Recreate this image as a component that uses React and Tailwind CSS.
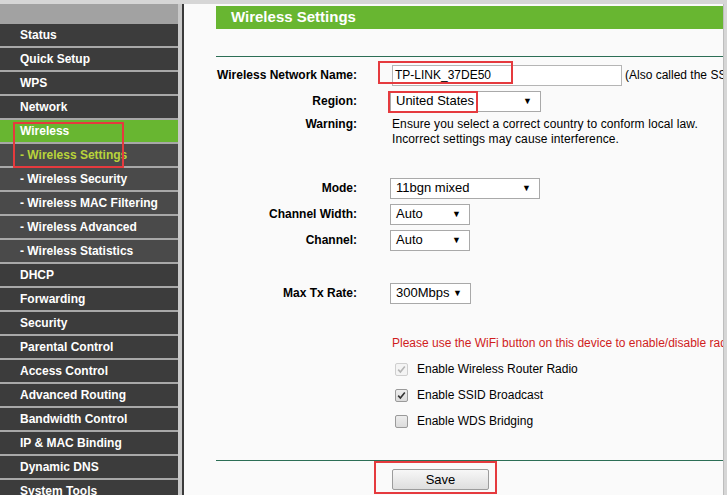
import React from 'react';

const menu = [
  { label: 'Status' },
  { label: 'Quick Setup' },
  { label: 'WPS' },
  { label: 'Network' },
  { label: 'Wireless', active: true },
  { label: '- Wireless Settings', sub: true, current: true },
  { label: '- Wireless Security', sub: true },
  { label: '- Wireless MAC Filtering', sub: true },
  { label: '- Wireless Advanced', sub: true },
  { label: '- Wireless Statistics', sub: true },
  { label: 'DHCP' },
  { label: 'Forwarding' },
  { label: 'Security' },
  { label: 'Parental Control' },
  { label: 'Access Control' },
  { label: 'Advanced Routing' },
  { label: 'Bandwidth Control' },
  { label: 'IP & MAC Binding' },
  { label: 'Dynamic DNS' },
  { label: 'System Tools' },
];

const Sidebar = () => {
  return (
    <aside className="w-[178px] flex-shrink-0 overflow-hidden">
      <div className="h-[20px] bg-[#a2a2a2]" />
      <ul>
        {menu.map((item) => {
          let bg = 'bg-[#3c3c3c] text-white';
          if (item.active) bg = 'bg-[#68b631] text-white';
          else if (item.current) bg = 'bg-[#4a4a4a] text-[#b9d43a]';
          else if (item.sub) bg = 'bg-[#4a4a4a] text-white';
          return (
            <li
              key={item.label}
              className={`h-[24px] border-b-2 border-[#a8a8a8] pl-[20px] flex items-center text-[12px] font-bold whitespace-nowrap ${bg}`}
            >
              {item.label}
            </li>
          );
        })}
      </ul>
    </aside>
  );
};

const Select = ({ value, width }) => (
  <div
    className={`${width} h-[21px] bg-white border border-[#a9a9a9] flex items-center justify-between pl-[5px] pr-[8px] text-[13px] text-black`}
  >
    <span>{value}</span>
    <span className="text-[9px] leading-none">▼</span>
  </div>
);

const Check = ({ checked, disabled }) => (
  <div
    className={`w-[13px] h-[13px] rounded-[2px] border flex items-center justify-center ${
      disabled ? 'border-[#cfcfcf] bg-[#f4f4f4]' : 'border-[#9a9a9a] bg-gradient-to-b from-[#ededed] to-[#dcdcdc]'
    }`}
  >
    {checked && (
      <svg width="9" height="9" viewBox="0 0 9 9">
        <path
          d="M1.2 4.6 L3.4 7 L7.8 1.6"
          fill="none"
          stroke={disabled ? '#b4b4b4' : '#333'}
          strokeWidth="1.6"
        />
      </svg>
    )}
  </div>
);

const Label = ({ children, className = '' }) => (
  <div className={`text-right font-bold text-[12px] text-black ${className}`}>{children}</div>
);

export default function App() {
  return (
    <div
      className="relative w-[727px] h-[495px] overflow-hidden bg-[#d6d6d6] flex flex-col"
      style={{ fontFamily: '"Liberation Sans", Arial, sans-serif' }}
    >
      <div className="h-[4px] flex-shrink-0" />
      <div className="flex flex-1 min-h-0">
        <Sidebar />
        <div className="w-[4px] bg-[#c9c9c9]" />
        <div className="w-[2px] bg-[#3a3a3a]" />
        <main className="w-[539px] bg-[#fafafa] pl-[32px] overflow-hidden flex flex-col">
          <div className="mt-[2px] h-[23px] flex-shrink-0 bg-[#68b631] pl-[15px] flex items-center text-white font-bold text-[15px]">
            Wireless Settings
          </div>
          <div className="mt-[27px] h-[1px] flex-shrink-0 bg-[#2c6e55]" />

          <div className="grid grid-cols-[141px_1fr] gap-x-[33px] text-[12px] text-black">
            <Label className="mt-[5px] h-[26px] flex items-center justify-end">Wireless Network Name:</Label>
            <div className="mt-[5px] h-[26px] flex items-center whitespace-nowrap">
              <div className="ml-[2px] w-[230px] h-[21px] bg-white border border-[#b5b5b5] flex items-center pl-[2px] text-[12px]">
                TP-LINK_37DE50
              </div>
              <span className="ml-[3px]">(Also called the SSID)</span>
            </div>

            <Label className="h-[26px] flex items-center justify-end">Region:</Label>
            <div className="h-[26px] flex items-center">
              <Select value="United States" width="w-[151px]" />
            </div>

            <Label className="mt-[3px] leading-[15px]">Warning:</Label>
            <div className="mt-[3px] leading-[15px] pl-[2px] tracking-[0.1px]">
              Ensure you select a correct country to conform local law.
              <br />
              Incorrect settings may cause interference.
            </div>

            <Label className="mt-[28px] h-[26px] flex items-center justify-end">Mode:</Label>
            <div className="mt-[28px] h-[26px] flex items-center">
              <Select value="11bgn mixed" width="w-[150px]" />
            </div>

            <Label className="h-[26px] flex items-center justify-end">Channel Width:</Label>
            <div className="h-[26px] flex items-center">
              <Select value="Auto" width="w-[80px]" />
            </div>

            <Label className="h-[26px] flex items-center justify-end">Channel:</Label>
            <div className="h-[26px] flex items-center">
              <Select value="Auto" width="w-[80px]" />
            </div>

            <Label className="mt-[27px] h-[26px] flex items-center justify-end">Max Tx Rate:</Label>
            <div className="mt-[27px] h-[26px] flex items-center">
              <Select value="300Mbps" width="w-[81px]" />
            </div>

            <div className="mt-[24px]" />
            <div className="mt-[24px] h-[26px] pl-[2px] flex items-center whitespace-nowrap text-[#d01d1d]">
              Please use the WiFi button on this device to enable/disable radio.
            </div>

            {[
              { text: 'Enable Wireless Router Radio', checked: true, disabled: true },
              { text: 'Enable SSID Broadcast', checked: true },
              { text: 'Enable WDS Bridging', checked: false },
            ].map((c) => (
              <React.Fragment key={c.text}>
                <div />
                <div className="h-[26px] flex items-center gap-[9px] pl-[5px]">
                  <Check checked={c.checked} disabled={c.disabled} />
                  <span>{c.text}</span>
                </div>
              </React.Fragment>
            ))}
          </div>

          <div className="mt-[26px] h-[1px] flex-shrink-0 bg-[#2c6e55]" />
          <div className="pl-[176px] mt-[8px]">
            <button className="w-[97px] h-[21px] border border-[#9c9c9c] rounded-[2px] bg-gradient-to-b from-[#f7f7f7] to-[#dedede] text-[13px] text-black flex items-center justify-center">
              Save
            </button>
          </div>
        </main>
        <div className="flex-1 border-l border-[#bdbdbd]" />
      </div>

      {/* annotation boxes */}
      <div className="absolute left-[13px] top-[122px] w-[111px] h-[46px] border-2 border-[#e53a3e]" />
      <div className="absolute left-[378px] top-[61px] w-[135px] h-[23px] border-2 border-[#e53a3e]" />
      <div className="absolute left-[388px] top-[91px] w-[90px] h-[22px] border-2 border-[#e53a3e]" />
      <div className="absolute left-[374px] top-[461px] w-[123px] h-[33px] border-2 border-[#e53a3e]" />
    </div>
  );
}
